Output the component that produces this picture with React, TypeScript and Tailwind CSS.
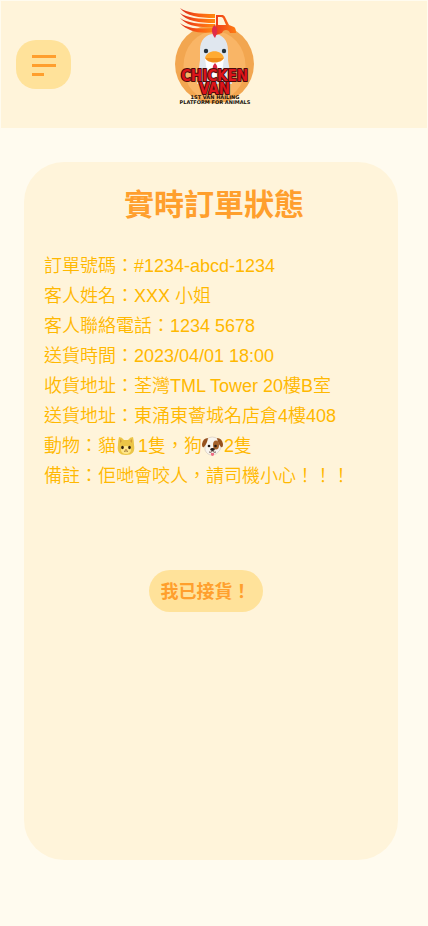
function Logo() {
  return (
    <svg width="80" height="100" viewBox="174 6 80 100" role="img" aria-label="Chicken Van" className="block overflow-visible">
      <defs>
        <clipPath id="disc"><circle cx="214.500" cy="64" r="39.500" /></clipPath>
        <linearGradient id="speed" gradientUnits="userSpaceOnUse" x1="180" x2="215" y1="0" y2="0">
          <stop offset="0" stopColor="#d82a1c" />
          <stop offset="0.500" stopColor="#fa5a14" />
          <stop offset="1" stopColor="#ff8a10" />
        </linearGradient>
        <linearGradient id="van" gradientUnits="userSpaceOnUse" x1="215" x2="236" y1="0" y2="0">
          <stop offset="0" stopColor="#ee3a1c" />
          <stop offset="1" stopColor="#ff7d12" />
        </linearGradient>
      </defs>
      <circle cx="214.500" cy="64" r="39.500" fill="#f2a650" />
      <g clipPath="url(#disc)">
        <ellipse cx="214.500" cy="66" rx="31" ry="35" fill="#f9b566" />
        <path d="M200 60V50C200 40 206 34 214 34S228 40 228 50V60L232 84H197Z" fill="#e0e7ef" />
        <path d="M205 58H224L221 80H208Z" fill="#fff" />
      </g>
      <g fill="url(#speed)">
        <path d="M180 8C187 13 199 14 215 14V18C199 18 186 16 180 8Z" />
        <path d="M180 13C187 18 199 19 215 19V23C199 23 186 21 180 13Z" />
        <path d="M180 18C187 23 199 24 215 24V27C199 28 187 26 180 18Z" />
        <path d="M180 23C188 29 200 29 215 28V32C201 34 188 32 180 23Z" />
      </g>
      <path
        d="M216 15H223Q225 16 226 19L229 25L234 27Q236 28 236 33H230Q229 30 226 30Q223 30 222 33L216 35ZM218 17V25H226L223 18Q222 17 221 17Z"
        fill="url(#van)"
        fillRule="evenodd"
      />
      <path d="M214.500 25C218 28 218 32 215 38C211 33 211 28 214.500 25Z" fill="#e02c49" />
      <circle cx="206" cy="51" r="2.200" fill="#23313c" />
      <circle cx="224" cy="51" r="2.200" fill="#23313c" />
      <path d="M205 58C207 49 222 49 224 58Z" fill="#ffab32" />
      <path d="M205 58H224C221 64 208 64 205 58Z" fill="#ef8d19" />
      <path d="M215 63C218 66 218 69 215 73C212 69 212 66 215 63Z" fill="#db2846" />
      <g textAnchor="middle" fontWeight="700" className="font-['DejaVu_Sans_Condensed','DejaVu_Sans',sans-serif]">
        <g fill="#dc141a" stroke="#4a0c0c" strokeWidth="2" paintOrder="stroke" strokeLinejoin="round">
          <text x="214.500" y="81" fontSize="15">CHICKEN</text>
          <text x="214.500" y="94" fontSize="15">VAN</text>
        </g>
      </g>
      <g textAnchor="middle" fontWeight="700" fill="#17120c" fontSize="5" className="font-['DejaVu_Sans',sans-serif]">
        <text x="215" y="99">1ST VAN HAILING</text>
        <text x="215" y="104">PLATFORM FOR ANIMALS</text>
      </g>
    </svg>
  );
}

function Cat() {
  return (
    <svg role="img" aria-label="貓" viewBox="0 0 22 22" className="inline-block h-[22px] w-[22px] align-middle">
      <path d="M3 2Q6 2 8 5H12Q14 2 17 2Q18 6 18 10Q20 20 10 20Q0 20 2 10Q2 6 3 2Z" fill="#ecc547" />
      <path d="M4 4L6 6L4 8ZM16 4L14 6L16 8Z" fill="#d19a35" />
      <ellipse cx="10" cy="15" rx="5" ry="4" fill="#ffe788" />
      <ellipse cx="6.500" cy="12.500" rx="1.300" ry="1.700" fill="#35220f" />
      <ellipse cx="13.500" cy="12.500" rx="1.300" ry="1.700" fill="#35220f" />
      <path d="M9 14H11L10 15Z" fill="#b35b3d" />
      <path d="M8 16Q9 17 10 15.500Q11 17 12 16" fill="none" stroke="#7b4a19" strokeWidth="0.800" />
    </svg>
  );
}

function Dog() {
  return (
    <svg role="img" aria-label="狗" viewBox="0 0 22 22" className="inline-block h-[22px] w-[22px] align-middle">
      <path d="M5 4Q10 0 16 4Q20 8 18 15Q15 20 10 20Q5 20 3 15Q2 8 5 4Z" fill="#f8f4ee" stroke="#c8bbae" strokeWidth="0.500" />
      <path d="M6 3Q1 3 0 9Q0 13 2 12Q5 9 6 3ZM15 3Q20 3 21 9Q21 13 19 12Q16 9 15 3Z" fill="#96511f" />
      <ellipse cx="14" cy="10" rx="3" ry="4.500" fill="#a4612b" />
      <circle cx="7" cy="11" r="1.300" fill="#271b15" />
      <circle cx="13.500" cy="11" r="1.300" fill="#271b15" />
      <path d="M9 18H12V20Q10.500 22 9 20Z" fill="#f16d85" />
      <ellipse cx="10.500" cy="14.500" rx="2.200" ry="1.400" fill="#241c1a" />
      <path d="M7 17Q9 18 10.500 16Q12 18 14 17" fill="none" stroke="#4b3429" strokeWidth="0.800" />
    </svg>
  );
}

export default function App() {
  return (
    <div className="min-h-screen bg-[#fffbef] font-['Liberation_Sans','Noto_Sans_CJK_TC',sans-serif]" lang="zh-HK">
      <div className="px-px pt-px">
        <header className="grid h-[127px] grid-cols-[1fr_auto_1fr] items-start bg-[#fff4da] px-[15px]">
          <button type="button" aria-label="選單" className="mt-[39px] flex h-[49px] w-[55px] flex-col gap-[6px] rounded-[20px] bg-[#ffe29a] pt-[15px] pl-4">
            <span className="h-[3px] w-6 bg-[#ff9f2d]" />
            <span className="h-[3px] w-6 bg-[#ff9f2d]" />
            <span className="h-[3px] w-3 bg-[#ff9f2d]" />
          </button>
          <div className="mt-[5px]"><Logo /></div>
        </header>
      </div>
      <main className="pt-[34px] pr-[30px] pb-[66px] pl-6">
        <section className="flex min-h-[698px] flex-col rounded-[40px] bg-[#fff4da] pt-5">
          <h1 className="pt-px pl-[6px] text-center text-[30px] leading-[44px] font-bold text-[#ff9f2d]">實時訂單狀態</h1>
          <div className="mt-6 pl-5 text-lg leading-[30px] font-[350] whitespace-nowrap text-[#ffb800]">
            <p>訂單號碼：#1234-abcd-1234</p>
            <p>客人姓名：XXX 小姐</p>
            <p>客人聯絡電話：1234 5678</p>
            <p>送貨時間：2023/04/01 18:00</p>
            <p>收貨地址：荃灣TML Tower 20樓B室</p>
            <p>送貨地址：東涌東薈城名店倉4樓408</p>
            <p className="flex items-center">動物：貓<Cat />1隻，狗<Dog />2隻</p>
            <p>備註：佢哋會咬人，請司機小心！！！</p>
          </div>
          <button type="button" className="mt-[79px] mr-[11px] h-[42px] self-center rounded-full bg-[#ffe29a] px-3 pt-[2px] text-lg font-bold whitespace-nowrap text-[#ff9f2d]">我已接貨！</button>
        </section>
      </main>
    </div>
  );
}
